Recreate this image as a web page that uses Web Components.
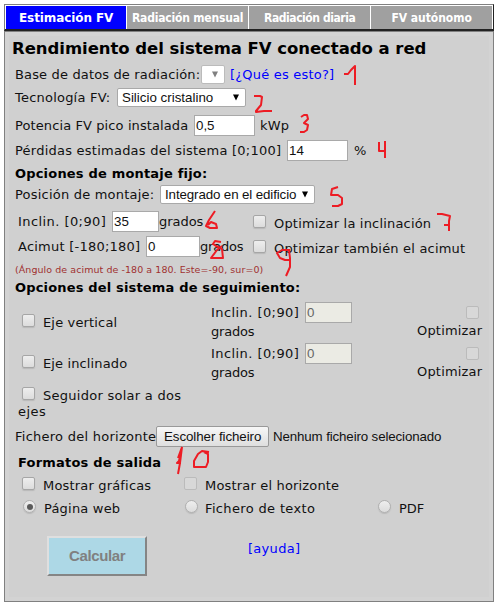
<!DOCTYPE html>
<html lang="es">
<head>
<meta charset="utf-8">
<title>Estimación FV</title>
<style>
body{margin:0;background:#fff;width:499px;height:608px;overflow:hidden;font-family:"DejaVu Sans",sans-serif;color:#000}
</style>
</head>
<body>
<pv-app></pv-app>
<script>
const define = (name, css, html, ready) => customElements.define(name, class extends HTMLElement {
  connectedCallback() {
    if (this.shadowRoot) return;
    const root = this.attachShadow({mode: 'open'});
    root.innerHTML = `<style>:host{box-sizing:border-box;flex:none;margin-left:calc(var(--g,0)*1px);margin-top:calc(var(--t,0)*1px)}${css}</style>${html}`;
    for (const [attr, prop] of [['g','--g'],['t','--t'],['w','--w'],['h','--h']])
      this.style.setProperty(prop, this.getAttribute(attr) || (attr === 'h' ? '21' : '0'));
    if (ready) ready.call(this, root);
  }
});

/* Text run whose tracking is set so that it fills the width w. */
define('pv-text',
  `:host{display:block;width:calc(var(--w)*1px);height:16px;line-height:16px;font-size:13px;white-space:nowrap;color:#111}
   :host([kind=head]){font-weight:bold;color:#000}
   :host([kind=title]){font-weight:bold;font-size:16.5px;height:20px;line-height:20px;color:#000}
   :host([kind=note]){font-size:9.5px;height:12px;line-height:12px;color:#a03030}
   :host([kind=link]){color:#00f}
   :host([kind=arial]){font-family:"Liberation Sans",sans-serif;font-size:13.33px}
   :host([kind=tab]){font-size:12px;font-weight:bold;color:inherit}
   :host([kind=tabn]){font-family:"DejaVu Sans Condensed","DejaVu Sans",sans-serif;font-stretch:condensed;font-size:12px;font-weight:bold;color:inherit}
   :host([kind=big]){font-family:"Liberation Sans",sans-serif;font-size:15px;font-weight:bold;color:#808080}
   span{display:inline-block}`,
  `<span><slot></slot></span>`,
  function (root) {
    const s = root.querySelector('span'), n = [...this.textContent].length;
    const w = +this.getAttribute('w');
    if (w) s.style.letterSpacing = ((w + .3 - s.getBoundingClientRect().width) / n) + 'px';
  });

define('pv-row',
  `:host{display:flex;align-items:flex-start;height:calc(var(--h)*1px);margin:0}`,
  `<slot></slot>`);

define('pv-col',
  `:host{display:flex;flex-direction:column;width:calc(var(--w)*1px)}`,
  `<slot></slot>`);

define('pv-input',
  `:host{display:flex;align-items:center;width:calc(var(--w)*1px);height:21px;border:1px solid #a9a9a9;background:#fff;padding-left:1px;font:13.33px/19px "Liberation Sans",sans-serif;color:#111}
   :host([disabled]){background:#ebebe4;color:#666}`,
  `<slot></slot>`);

define('pv-select',
  `:host{display:flex;align-items:center;justify-content:space-between;width:calc(var(--w)*1px);height:19px;border:1px solid #a9a9a9;border-radius:2px;background:#fff;padding:0 6px 0 4px;color:#000}
   :host([disabled]){border-color:#bbb;color:#808080}
   svg{display:block;margin-left:auto}`,
  `<slot></slot><svg width="6" height="7" viewBox="0 0 6 7"><path d="M0 .5h6L3 6.5z" fill="currentColor"/></svg>`);

define('pv-check',
  `:host{display:block;width:13px;height:13px;border:1px solid #a6a6a6;border-radius:2px;background:linear-gradient(#eee,#dcdcdc);box-shadow:0 1px 1px #b8b8b8}
   :host([disabled]){border-color:#bbb;background:#d8d8d8;box-shadow:none}
   :host([radio]){border-radius:50%;border-color:#b0b0b0}
   i{display:none}
   :host([checked]) i{display:block;width:6px;height:6px;margin:2.5px;border-radius:50%;background:#5a5a5a}`,
  `<i></i>`);

define('pv-file-button',
  `:host{display:flex;align-items:center;width:calc(var(--w)*1px);height:21px;border:1px solid #999;border-radius:2px;background:linear-gradient(#f7f7f7,#dedede);padding-left:7px}`,
  `<slot></slot>`);

define('pv-submit',
  `:host{display:flex;align-items:center;justify-content:center;width:100px;height:40px;border:2px solid;border-color:#dfdfdf #858585 #858585 #dfdfdf;background:#add8e6}`,
  `<slot></slot>`);

define('pv-tab',
  `:host{display:flex;align-items:center;justify-content:center;width:calc(var(--w)*1px);height:23px;background:#a0a0a0;color:#fff}
   :host([active]){background:#00f}`,
  `<slot></slot>`);

define('pv-tabs',
  `:host{display:flex;gap:1px;width:490px;height:27px;border:1px solid #808080;border-right-color:#222;border-bottom:2px solid #222;padding:1px;background:#fff}`,
  `<slot></slot>`);

define('pv-panel',
  `:host{display:block;width:490px;height:571px;border:1px solid #808080;background:#d0d0d0;box-shadow:inset 0 0 0 4px #d3d3d3;padding-top:1px}`,
  `<slot></slot>`);

/* Handwritten numbering laid over the form. */
define('pv-marks',
  `:host{position:absolute;left:0;top:0;width:499px;height:608px;pointer-events:none}
   svg{display:block}`,
  `<svg width="499" height="608" fill="none" stroke="#ed1c24" stroke-width="2" stroke-linejoin="round">
    <path d="M344 74h4l3-4 4-4v19"/>
    <path d="M254 96h6l2 1-1 8-5 6v1l8-1h8"/>
    <path d="M301 117l3-2h3l1 4-4 4 4 2-1 5-3 2h-4"/>
    <path d="M379 142v9h6M382 151h4M385 141v17M379 143v8"/>
    <path d="M338 187l-6 2-1 6 7 0 4 3v6l-4 2h-6"/>
    <path d="M215 211l-6 9-3 6 4 2h7l-1-4-5-2-3 3"/>
    <path d="M437 214l5 0 8 2-1 5v10M444 225h6"/>
    <path d="M221 242l-6-1-2 3 3 2 6 3 1 9h-12l6-8 5-4"/>
    <path d="M290 250l-8 0-5 3 3 5 5 2h5M289 250l1 8 0 9-4 9"/>
    <path d="M182 447l-3 14-2 2 4 0M182 447l-2 16-2 11M182 447l-4 11"/>
    <path d="M209 452l-7-1-4 3-4 7v6h12l2-5v-8l-4-2"/>
  </svg>`);

define('pv-app',
  `:host{display:flex;flex-direction:column;padding:4px 0 0 4px;margin:0;position:relative}`,
  `<pv-tabs>
    <pv-tab w="120" active><pv-text kind="tab" w="94">Estimación FV</pv-text></pv-tab>
    <pv-tab w="121"><pv-text kind="tabn" w="111">Radiación mensual</pv-text></pv-tab>
    <pv-tab w="121"><pv-text kind="tabn" w="91">Radiación diaria</pv-text></pv-tab>
    <pv-tab w="121"><pv-text kind="tabn" w="80">FV autónomo</pv-text></pv-tab>
  </pv-tabs>
  <pv-panel>
    <pv-row h="29"><pv-text kind="title" g="7" t="6" w="414">Rendimiento del sistema FV conectado a red</pv-text></pv-row>
    <pv-row h="24"><pv-text g="10" t="5" w="185">Base de datos de radiación:</pv-text><pv-select disabled g="1" t="3" w="24"></pv-select><pv-text kind="link" g="5" t="5" w="104">[¿Qué es esto?]</pv-text></pv-row>
    <pv-row h="26"><pv-text g="10" t="4" w="95">Tecnología FV:</pv-text><pv-select g="7" t="2" w="129"><pv-text kind="arial" w="91">Silicio cristalino</pv-text></pv-select></pv-row>
    <pv-row h="26"><pv-text g="10" t="6" w="173">Potencia FV pico instalada</pv-text><pv-input g="6" t="3" w="61">0,5</pv-input><pv-text g="5" t="6" w="29">kWp</pv-text></pv-row>
    <pv-row h="25"><pv-text g="10" t="5" w="266">Pérdidas estimadas del sistema [0;100]</pv-text><pv-input g="6" t="2" w="61">14</pv-input><pv-text g="6" t="5" w="12">%</pv-text></pv-row>
    <pv-row h="20"><pv-text kind="head" g="10" t="3" w="192">Opciones de montaje fijo:</pv-text></pv-row>
    <pv-row h="25"><pv-text g="10" t="4" w="139">Posición de montaje:</pv-text><pv-select g="6" t="2" w="155"><pv-text kind="arial" w="131">Integrado en el edificio</pv-text></pv-select></pv-row>
    <pv-row h="25"><pv-text g="13" t="6" w="88">Inclin. [0;90]</pv-text><pv-input g="6" t="3" w="47">35</pv-input><pv-text w="44" t="6">grados</pv-text><pv-check g="50" t="7"></pv-check><pv-text g="8" t="8" w="157">Optimizar la inclinación</pv-text></pv-row>
    <pv-row h="27"><pv-text g="13" t="6" w="122">Acimut [-180;180]</pv-text><pv-input g="6" t="3" w="54">0</pv-input><pv-text w="43" t="6">grados</pv-text><pv-check g="10" t="7"></pv-check><pv-text g="8" t="8" w="191">Optimizar también el acimut</pv-text></pv-row>
    <pv-row h="18"><pv-text kind="note" g="10" t="4" w="248">(Ángulo de acimut de -180 a 180. Este=-90, sur=0)</pv-text></pv-row>
    <pv-row h="21"><pv-text kind="head" g="10" t="2" w="285">Opciones del sistema de seguimiento:</pv-text></pv-row>
    <pv-row h="41"><pv-check g="17" t="15"></pv-check><pv-text g="8" t="16" w="74">Eje vertical</pv-text>
      <pv-col g="94" w="94"><pv-text t="6" w="88">Inclin. [0;90]</pv-text><pv-text t="3" w="43">grados</pv-text></pv-col><pv-input disabled t="3" w="47">0</pv-input>
      <pv-col g="65" w="66"><pv-check disabled g="49" t="7"></pv-check><pv-text t="4" w="65">Optimizar</pv-text></pv-col></pv-row>
    <pv-row h="41"><pv-check g="17" t="15"></pv-check><pv-text g="8" t="16" w="84">Eje inclinado</pv-text>
      <pv-col g="84" w="94"><pv-text t="6" w="88">Inclin. [0;90]</pv-text><pv-text t="3" w="43">grados</pv-text></pv-col><pv-input disabled t="3" w="47">0</pv-input>
      <pv-col g="65" w="66"><pv-check disabled g="49" t="7"></pv-check><pv-text t="4" w="65">Optimizar</pv-text></pv-col></pv-row>
    <pv-col w="200">
      <pv-row h="23"><pv-check g="17" t="6"></pv-check><pv-text g="8" t="7" w="138">Seguidor solar a dos</pv-text></pv-row>
      <pv-row h="19"><pv-text g="13" w="28">ejes</pv-text></pv-row>
    </pv-col>
    <pv-row h="28"><pv-text g="10" t="6" w="141">Fichero del horizonte</pv-text><pv-file-button t="3" w="113"><pv-text kind="arial" w="97">Escolher ficheiro</pv-text></pv-file-button><pv-text kind="arial" g="4" t="6" w="168">Nenhum ficheiro selecionado</pv-text></pv-row>
    <pv-row h="21"><pv-text kind="head" g="13" t="4" w="143">Formatos de salida</pv-text></pv-row>
    <pv-row h="24"><pv-check g="17" t="5"></pv-check><pv-text g="8" t="6" w="108">Mostrar gráficas</pv-text><pv-check disabled g="33" t="5"></pv-check><pv-text g="8" t="6" w="134">Mostrar el horizonte</pv-text></pv-row>
    <pv-row h="26"><pv-check radio checked g="18" t="4"></pv-check><pv-text g="8" t="5" w="76">Página web</pv-text><pv-check radio g="65" t="4"></pv-check><pv-text g="7" t="5" w="110">Fichero de texto</pv-text><pv-check radio g="63" t="4"></pv-check><pv-text g="8" t="5" w="25">PDF</pv-text></pv-row>
    <pv-row h="76"><pv-submit g="42" t="14"><pv-text kind="big" w="56">Calcular</pv-text></pv-submit><pv-text kind="link" g="101" t="19" w="52">[ayuda]</pv-text></pv-row>
  </pv-panel>
  <pv-marks></pv-marks>`);
</script>
</body>
</html>
